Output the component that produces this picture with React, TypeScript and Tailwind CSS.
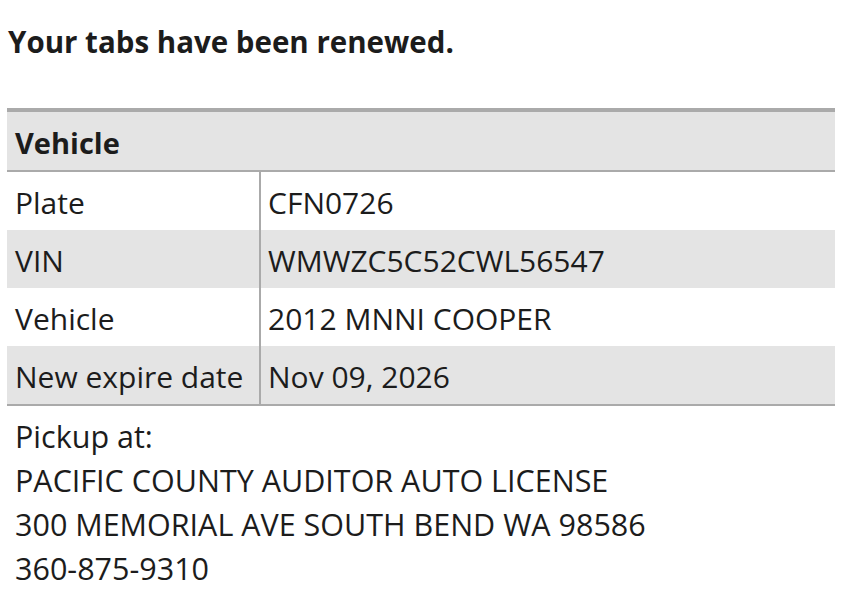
import React from "react";

const rows: { label: string; value: string; shaded?: boolean }[] = [
  { label: "Plate", value: "CFN0726" },
  { label: "VIN", value: "WMWZC5C52CWL56547", shaded: true },
  { label: "Vehicle", value: "2012 MNNI COOPER" },
  { label: "New expire date", value: "Nov 09, 2026", shaded: true },
];

export default function App() {
  return (
    <div className="min-h-screen bg-white text-[#1c1c1c] px-[7px] pt-[22px]" style={{ fontFamily: '"Open Sans", "Noto Sans", sans-serif' }}>
      <h1 className="text-[29.5px] font-bold leading-[40px] pl-[1px]">Your tabs have been renewed.</h1>

      <div className="mt-[46px] w-[828px] border-t-[4px] border-[#aaaaaa]">
        <div className="bg-[#e4e4e4] h-[60px] flex items-center px-[8px] pt-[4px] text-[29px] font-bold border-b-2 border-[#aaaaaa]">
          Vehicle
        </div>
        {rows.map((r) => (
          <div key={r.label} className={`flex h-[58px] items-center text-[30px] ${r.shaded ? "bg-[#e4e4e4]" : "bg-white"}`}>
            <div className="w-[254px] h-full flex items-center pt-[2px] px-[8px] border-r-2 border-[#aaaaaa] whitespace-nowrap">{r.label}</div>
            <div className="flex-1 px-[7px] pt-[2px]">{r.value}</div>
          </div>
        ))}
        <div className="border-b-2 border-[#aaaaaa]" />
      </div>

      <div className="px-[8px] pt-[8px] text-[30.5px] leading-[44px]">
        <div>Pickup at:</div>
        <div>PACIFIC COUNTY AUDITOR AUTO LICENSE</div>
        <div>300 MEMORIAL AVE SOUTH BEND WA 98586</div>
        <div>360-875-9310</div>
      </div>
    </div>
  );
}
